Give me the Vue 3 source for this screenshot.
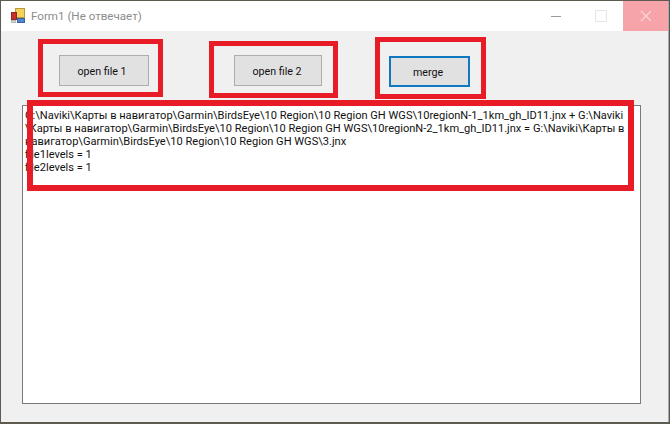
<script setup>
const lines = [
  'G:\\Naviki\\Карты в навигатор\\Garmin\\BirdsEye\\10 Region\\10 Region GH WGS\\10regionN-1_1km_gh_ID11.jnx + G:\\Naviki',
  '\\Карты в навигатор\\Garmin\\BirdsEye\\10 Region\\10 Region GH WGS\\10regionN-2_1km_gh_ID11.jnx = G:\\Naviki\\Карты в',
  'навигатор\\Garmin\\BirdsEye\\10 Region\\10 Region GH WGS\\3.jnx',
  'file1levels = 1',
  'file2levels = 1',
]
</script>

<template>
  <div class="desktop">
    <div class="window">
      <header class="titlebar">
        <svg class="appicon" width="16" height="16" viewBox="0 0 16 16">
          <rect x="5.5" y="0.5" width="9" height="9" fill="#f5d255" stroke="#b59a3a" />
          <rect x="1.5" y="4.5" width="5" height="7" fill="#c8302c" stroke="#8d2a28" />
          <rect x="7.5" y="10.5" width="7" height="4" fill="#4f86d0" stroke="#3a64a0" />
          <rect x="1.5" y="12.5" width="4" height="2" fill="#d8d8d8" stroke="#b8b8b8" />
        </svg>
        <span class="title">Form1 (Не отвечает)</span>
        <div class="controls">
          <span class="ctl"><span class="min"></span></span>
          <span class="ctl"><span class="max"></span></span>
          <span class="ctl close">
            <svg width="12" height="12" viewBox="0 0 12 12">
              <path d="M1 1 L11 11 M11 1 L1 11" stroke="#fbd5d8" stroke-width="1.2" fill="none" />
            </svg>
          </span>
        </div>
      </header>
      <main class="client">
        <div class="buttons">
          <button class="btn b1">open file 1</button>
          <button class="btn b2">open file 2</button>
          <button class="btn b3">merge</button>
        </div>
        <div class="output">
          <div v-for="(l, i) in lines" :key="i" class="line">{{ l }}</div>
        </div>
      </main>
    </div>
    <div class="mark m1"></div>
    <div class="mark m2"></div>
    <div class="mark m3"></div>
    <div class="mark m4"></div>
  </div>
</template>

<style scoped>
.desktop {
  position: relative;
  width: 670px;
  height: 424px;
  padding: 1px;
  box-sizing: border-box;
  background: #5d5a50;
  overflow: hidden;
  font-family: Roboto, "Open Sans", sans-serif;
}
.window {
  width: 667px;
  height: 421px;
  display: flex;
  flex-direction: column;
  background: #f0f0f0;
  border-right: 1px solid #a8a8a8;
  box-sizing: content-box;
}
.titlebar {
  height: 30px;
  flex: none;
  background: #fff;
  display: flex;
  align-items: center;
}
.appicon {
  margin-left: 9px;
  flex: none;
}
.title {
  margin-left: 5px;
  font-size: 11.6px;
  color: #8c8c8c;
}
.controls {
  margin-left: auto;
  display: flex;
  height: 100%;
}
.ctl {
  width: 45px;
  display: flex;
  align-items: center;
  justify-content: center;
}
.min {
  width: 10px;
  height: 1px;
  background: #9a9a9a;
}
.max {
  width: 10px;
  height: 10px;
  border: 1px solid #e6e6e6;
}
.close {
  background: #f7a3aa;
}
.client {
  flex: 1;
  display: flex;
  flex-direction: column;
}
.buttons {
  display: flex;
  align-items: flex-start;
  height: 74px;
  padding: 24px 0 0 58px;
  box-sizing: border-box;
}
.btn {
  height: 31px;
  padding: 1px 2px 0 0;
  background: #e1e1e1;
  border: 1px solid #adadad;
  font: 10.7px Roboto, "Open Sans", sans-serif;
  color: #111;
  box-sizing: border-box;
}
.b1 { width: 90px; padding-right: 4px; }
.b2 { width: 88px; margin-left: 85px; }
.b3 {
  width: 81px;
  margin-left: 67px;
  margin-top: 1px;
  border: 2px solid #0f78c0;
  padding-right: 3px;
}
.output {
  margin-left: 21px;
  width: 619px;
  height: 299px;
  box-sizing: border-box;
  background: #fff;
  border: 1px solid #7a7a7a;
  padding: 3px 0 0 2px;
  font-size: 11.08px;
  line-height: 13px;
  color: #111;
}
.line {
  white-space: nowrap;
}
.mark {
  position: absolute;
  box-sizing: border-box;
  border: 5px solid #e81c26;
}
.m1 { left: 38px; top: 39px; width: 125px; height: 58px; }
.m2 { left: 209px; top: 41px; width: 129px; height: 57px; }
.m3 { left: 375px; top: 37px; width: 111px; height: 62px; }
.m4 { left: 27px; top: 100px; width: 607px; height: 91px; border-width: 6px; }
</style>
